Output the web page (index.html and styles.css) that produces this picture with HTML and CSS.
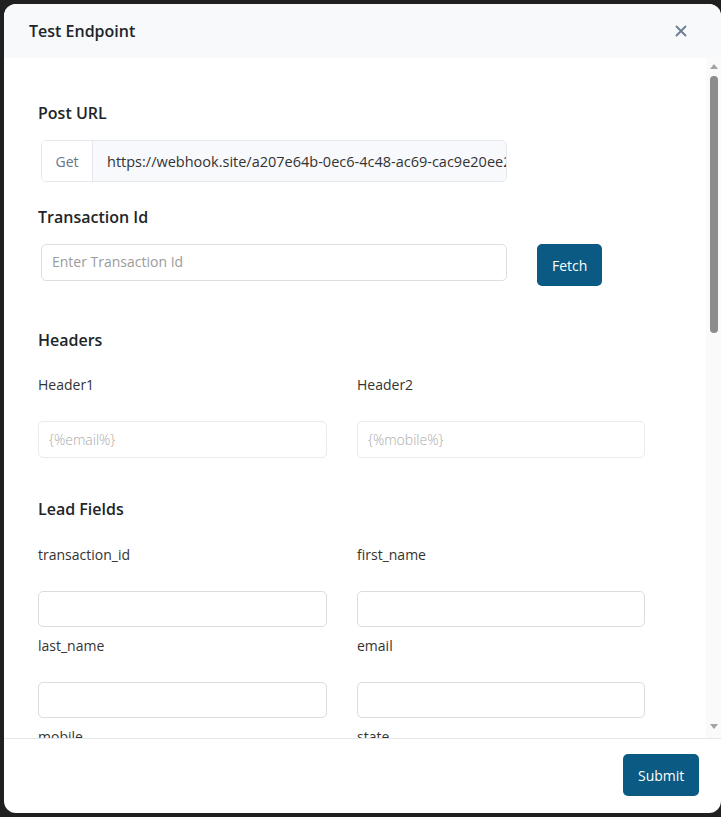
FILE: index.html
```html
<!DOCTYPE html>
<html>
<head>
<meta charset="utf-8">
<link rel="stylesheet" href="styles.css">
</head>
<body>
<div class="modal">
  <div class="modal-header">
    <h2 class="modal-title">Test Endpoint</h2>
    <button class="close" aria-label="Close">
      <svg width="12" height="12" viewBox="0 0 12 12"><path d="M1.5 1.5 L10.5 10.5 M10.5 1.5 L1.5 10.5" stroke="#6b7b90" stroke-width="1.8" stroke-linecap="round"/></svg>
    </button>
  </div>
  <div class="modal-body">
    <div class="body-scroll">
      <h3 class="section-title first">Post URL</h3>
      <div class="input-group">
        <span class="addon">Get</span>
        <input class="url" type="text" readonly value="https://webhook.site/a207e64b-0ec6-4c48-ac69-cac9e20ee2a1">
      </div>

      <h3 class="section-title">Transaction Id</h3>
      <div class="fetch-row">
        <input class="txn-input" type="text" placeholder="Enter Transaction Id">
        <button class="btn">Fetch</button>
      </div>

      <h3 class="section-title headers-title">Headers</h3>
      <div class="grid header-grid">
        <div class="field">
          <label>Header1</label>
          <input class="light-input" type="text" placeholder="{%email%}">
        </div>
        <div class="field">
          <label>Header2</label>
          <input class="light-input" type="text" placeholder="{%mobile%}">
        </div>
      </div>

      <h3 class="section-title lead-title">Lead Fields</h3>
      <div class="grid lead-grid">
        <div class="field"><label>transaction_id</label><input type="text"></div>
        <div class="field"><label>first_name</label><input type="text"></div>
        <div class="field"><label>last_name</label><input type="text"></div>
        <div class="field"><label>email</label><input type="text"></div>
        <div class="field"><label>mobile</label><input type="text"></div>
        <div class="field"><label>state</label><input type="text"></div>
        <div class="field"><label>city</label><input type="text"></div>
        <div class="field"><label>zip</label><input type="text"></div>
        <div class="field"><label>address</label><input type="text"></div>
        <div class="field"><label>dob</label><input type="text"></div>
        <div class="field"><label>gender</label><input type="text"></div>
        <div class="field"><label>ip_address</label><input type="text"></div>
        <div class="field"><label>source</label><input type="text"></div>
        <div class="field"><label>campaign</label><input type="text"></div>
        <div class="field"><label>sub_id</label><input type="text"></div>
        <div class="field"><label>country</label><input type="text"></div>
        <div class="field"><label>user_agent</label><input type="text"></div>
        <div class="field"><label>landing_page</label><input type="text"></div>
        <div class="field"><label>created_at</label><input type="text"></div>
        <div class="field"><label>consent</label><input type="text"></div>
        <div class="field"><label>comments</label><input type="text"></div>
        <div class="field"><label>status</label><input type="text"></div>
      </div>
    </div>
    <div class="scrollbar" aria-hidden="true">
      <span class="arrow up"></span>
      <span class="thumb"></span>
      <span class="arrow down"></span>
    </div>
  </div>
  <div class="modal-footer">
    <button class="btn submit">Submit</button>
  </div>
</div>
</body>
</html>
```

FILE: styles.css
```css
* { box-sizing: border-box; }

html, body {
  margin: 0;
  padding: 0;
  height: 100%;
  overflow: hidden;
}

body {
  background: #202020;
  font-family: "Open Sans", "Noto Sans", sans-serif;
  color: #333;
  padding: 4px 0 0 4px;
}

.modal {
  width: 717px;
  height: 809px;
  background: #fff;
  border-radius: 12px;
  display: flex;
  flex-direction: column;
  overflow: hidden;
}

.modal-header {
  height: 54px;
  flex: 0 0 54px;
  background: #f8f9fb;
  display: flex;
  align-items: center;
  justify-content: space-between;
  padding: 0 34px 0 25px;
}

.modal-title {
  margin: 0;
  font-size: 16px;
  font-weight: 600;
  color: #212529;
  line-height: 22px;
  padding-bottom: 1px;
}

.close {
  border: 0;
  background: transparent;
  padding: 0;
  width: 12px;
  height: 12px;
  display: flex;
  align-items: center;
  justify-content: center;
  cursor: pointer;
}

.modal-body {
  flex: 1 1 auto;
  position: relative;
  overflow: hidden;
}

.body-scroll {
  height: 100%;
  overflow: hidden;
  padding: 45px 34px 40px 34px;
}

.scrollbar {
  position: absolute;
  top: 0;
  right: 0;
  bottom: 0;
  width: 15px;
  background: #fafafa;
}

.arrow {
  position: absolute;
  left: 4px;
  width: 0;
  height: 0;
  border-left: 4px solid transparent;
  border-right: 4px solid transparent;
}
.arrow.up {
  top: 6px;
  border-bottom: 5px solid #a3a3a3;
}
.arrow.down {
  bottom: 9px;
  border-top: 5px solid #a3a3a3;
}

.thumb {
  position: absolute;
  top: 18px;
  left: 4px;
  width: 8px;
  height: 257px;
  border-radius: 4px;
  background: #8c8c8c;
}

.section-title {
  margin: 25px 0 0 0;
  font-size: 16px;
  font-weight: 600;
  line-height: 20px;
  color: #212529;
}
.section-title.first { margin-top: 0; }
.section-title.headers-title { margin-top: 44px; }
.section-title.lead-title { margin-top: 41px; }

.input-group {
  margin: 17px 0 0 3px;
  width: 466px;
  height: 42px;
  display: flex;
  border: 1px solid #e4e7ec;
  border-radius: 5px;
  overflow: hidden;
  font-size: 14px;
}

.addon {
  flex: 0 0 51px;
  display: flex;
  align-items: center;
  justify-content: center;
  background: #fff;
  color: #66758a;
  border-right: 1px solid #e4e7ec;
}

input.url {
  flex: 1 1 auto;
  min-width: 0;
  height: 100%;
  border: 0;
  padding: 0 0 0 14px;
  background: #f8f9fc;
  color: #333;
  font-size: 14.5px;
}

.fetch-row {
  margin: 17px 0 0 3px;
  display: flex;
  align-items: flex-start;
  gap: 30px;
}

input {
  font-family: "Open Sans", "Noto Sans", sans-serif;
  font-size: 14px;
  color: #333;
  outline: none;
  background: #fff;
}

.txn-input {
  width: 466px;
  height: 37px;
  border: 1px solid #dedede;
  border-radius: 5px;
  padding: 0 10px 3px 10px;
}
.txn-input::placeholder { color: #9b9b9b; }

.btn {
  height: 42px;
  padding: 0 15px;
  background: #0a5a83;
  color: #fff;
  border: 0;
  border-radius: 5px;
  font-family: "Open Sans", "Noto Sans", sans-serif;
  font-size: 14px;
  cursor: pointer;
}

.grid {
  display: grid;
  grid-template-columns: 289px 288px;
  column-gap: 30px;
}

.field label {
  display: block;
  font-size: 14px;
  line-height: 20px;
  color: #333;
}

.field input {
  display: block;
  width: 100%;
  height: 36px;
  margin-top: 26px;
  border: 1px solid #dcdcdc;
  border-radius: 5px;
  padding: 0 10px;
}

.header-grid { margin-top: 25px; }
.header-grid .field input.light-input {
  height: 37px;
  border-color: #ebebeb;
}
.light-input::placeholder { color: #ababab; font-weight: 300; }

.lead-grid { margin-top: 26px; row-gap: 9px; }

.modal-footer {
  flex: 0 0 75px;
  border-top: 1px solid #e5e7eb;
  display: flex;
  align-items: center;
  justify-content: flex-end;
  padding: 0 22px 2px 0;
}

.submit { padding: 0 15px; width: 76px; }
```
